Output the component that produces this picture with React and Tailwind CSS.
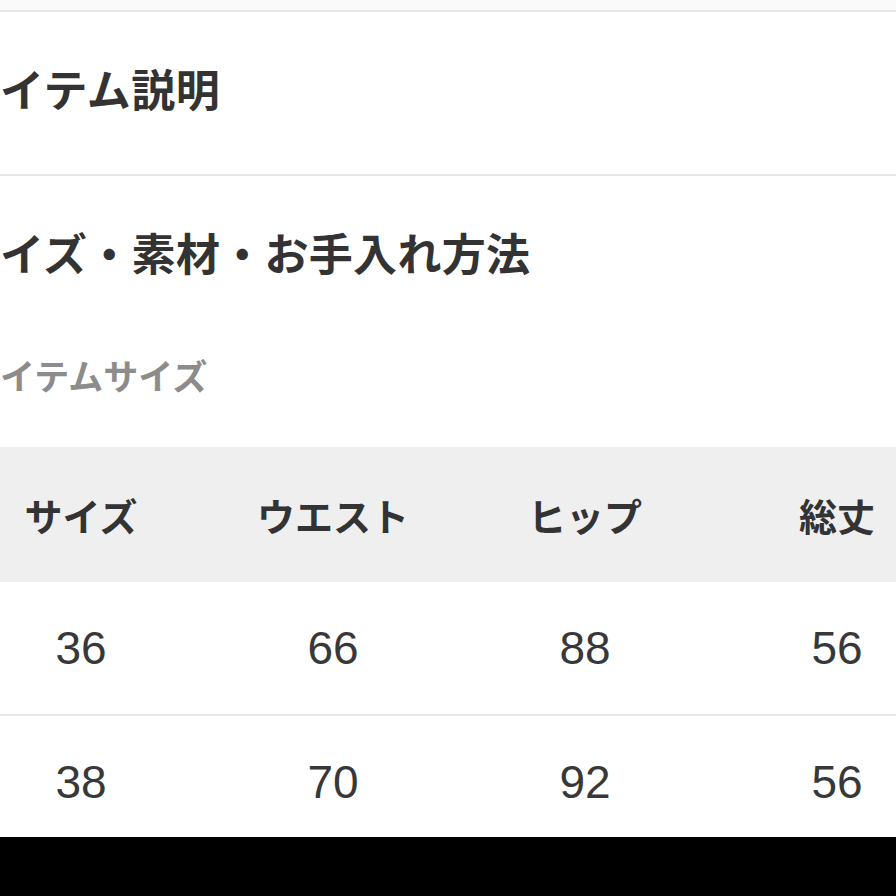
import React from 'react'

const jp = "font-['Noto_Sans_CJK_JP','Noto_Sans',sans-serif]"

const rows = [
  ['36', '66', '88', '56'],
  ['38', '70', '92', '56'],
]

export default function App() {
  return (
    <div className={`relative h-[896px] w-[896px] overflow-hidden bg-white text-[#333] ${jp}`}>
      {/* top strip */}
      <div className="h-[10px] bg-[#fafafa]" />
      <div className="h-[2px] bg-[#e6e6e6]" />

      {/* item description */}
      <div className="flex h-[162px] items-center pb-[10px]">
        <h2 className="text-[44px] font-bold leading-none tracking-[0.5px]">イテム説明</h2>
      </div>
      <div className="h-[2px] bg-[#e6e6e6]" />

      {/* size / material */}
      <div className="pt-[54px]">
        <h2 className="text-[44px] font-bold leading-[44px] tracking-[0.3px]">イズ・素材・お手入れ方法</h2>
      </div>
      <p className="mt-[83px] text-[35px] font-bold leading-[36px] text-[#8c8c8c]">イテムサイズ</p>

      {/* table */}
      <div className="ml-[-45px] mt-[54px] w-[1008px]">
        <div className="grid h-[135px] grid-cols-4 items-center bg-[#efefef]">
          {['サイズ', 'ウエスト', 'ヒップ', '総丈'].map(h => (
            <div key={h} className="text-center text-[38px] font-bold leading-none">{h}</div>
          ))}
        </div>
        {rows.map((r, i) => (
          <div key={i} className="grid h-[134px] grid-cols-4 items-center border-b-2 border-[#e8e8e8]">
            {r.map((v, j) => (
              <div key={j} className="text-center font-['Liberation_Sans',Arial,sans-serif] text-[46px] leading-none text-[#383838]">{v}</div>
            ))}
          </div>
        ))}
      </div>

      {/* bottom bar */}
      <div className="absolute bottom-0 left-0 h-[59px] w-full bg-black" />
    </div>
  )
}
